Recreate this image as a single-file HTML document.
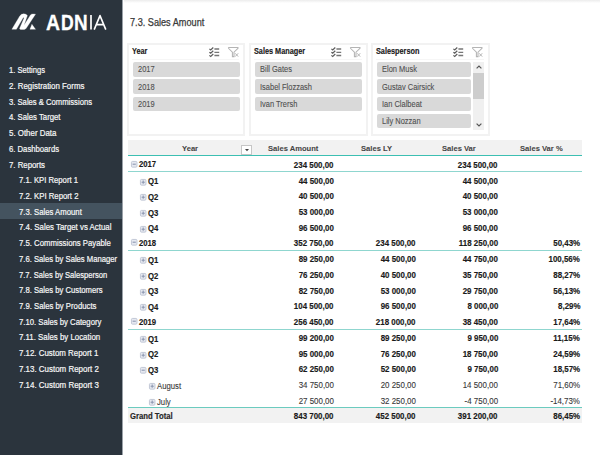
<!DOCTYPE html>
<html><head><meta charset="utf-8"><style>
html,body{margin:0;padding:0;width:600px;height:455px;overflow:hidden;background:#fff;}
body{position:relative;font-family:"Liberation Sans",sans-serif;}
.b{position:absolute;}
.t{position:absolute;white-space:nowrap;line-height:1;transform-origin:0 0;}
.t.r{transform-origin:100% 0;}
svg{overflow:visible}
</style></head><body>
<div class="b" style="left:0px;top:0px;width:122px;height:455px;background:#2b343d;"></div>
<div class="b" style="left:122px;top:0px;width:1px;height:455px;background:#9aa1a8;"></div>
<div class="b" style="left:0px;top:203px;width:122px;height:15.5px;background:#44535f;"></div>
<span class="t" style="left:9.10px;top:66.20px;font-size:8.5px;color:#f7f7f7;font-weight:normal;transform:scaleX(0.895);-webkit-text-stroke:0.2px #f7f7f7;">1. Settings</span>
<span class="t" style="left:9.10px;top:81.92px;font-size:8.5px;color:#f7f7f7;font-weight:normal;transform:scaleX(0.928);-webkit-text-stroke:0.2px #f7f7f7;">2. Registration Forms</span>
<span class="t" style="left:9.10px;top:97.64px;font-size:8.5px;color:#f7f7f7;font-weight:normal;transform:scaleX(0.901);-webkit-text-stroke:0.2px #f7f7f7;">3. Sales &amp; Commissions</span>
<span class="t" style="left:9.10px;top:113.36px;font-size:8.5px;color:#f7f7f7;font-weight:normal;transform:scaleX(0.91);-webkit-text-stroke:0.2px #f7f7f7;">4. Sales Target</span>
<span class="t" style="left:9.10px;top:129.08px;font-size:8.5px;color:#f7f7f7;font-weight:normal;transform:scaleX(0.929);-webkit-text-stroke:0.2px #f7f7f7;">5. Other Data</span>
<span class="t" style="left:9.10px;top:144.80px;font-size:8.5px;color:#f7f7f7;font-weight:normal;transform:scaleX(0.905);-webkit-text-stroke:0.2px #f7f7f7;">6. Dashboards</span>
<span class="t" style="left:9.10px;top:160.52px;font-size:8.5px;color:#f7f7f7;font-weight:normal;transform:scaleX(0.917);-webkit-text-stroke:0.2px #f7f7f7;">7. Reports</span>
<span class="t" style="left:18.90px;top:176.24px;font-size:8.5px;color:#f7f7f7;font-weight:normal;transform:scaleX(0.905);-webkit-text-stroke:0.2px #f7f7f7;">7.1. KPI Report 1</span>
<span class="t" style="left:18.90px;top:191.96px;font-size:8.5px;color:#f7f7f7;font-weight:normal;transform:scaleX(0.912);-webkit-text-stroke:0.2px #f7f7f7;">7.2. KPI Report 2</span>
<span class="t" style="left:18.90px;top:207.68px;font-size:8.5px;color:#f7f7f7;font-weight:normal;transform:scaleX(0.91);-webkit-text-stroke:0.2px #f7f7f7;">7.3. Sales Amount</span>
<span class="t" style="left:18.90px;top:223.40px;font-size:8.5px;color:#f7f7f7;font-weight:normal;transform:scaleX(0.924);-webkit-text-stroke:0.2px #f7f7f7;">7.4. Sales Target vs Actual</span>
<span class="t" style="left:18.90px;top:239.12px;font-size:8.5px;color:#f7f7f7;font-weight:normal;transform:scaleX(0.913);-webkit-text-stroke:0.2px #f7f7f7;">7.5. Commissions Payable</span>
<span class="t" style="left:18.90px;top:254.84px;font-size:8.5px;color:#f7f7f7;font-weight:normal;transform:scaleX(0.903);-webkit-text-stroke:0.2px #f7f7f7;">7.6. Sales by Sales Manager</span>
<span class="t" style="left:18.90px;top:270.56px;font-size:8.5px;color:#f7f7f7;font-weight:normal;transform:scaleX(0.894);-webkit-text-stroke:0.2px #f7f7f7;">7.7. Sales by Salesperson</span>
<span class="t" style="left:18.90px;top:286.28px;font-size:8.5px;color:#f7f7f7;font-weight:normal;transform:scaleX(0.903);-webkit-text-stroke:0.2px #f7f7f7;">7.8. Sales by Customers</span>
<span class="t" style="left:18.90px;top:302.00px;font-size:8.5px;color:#f7f7f7;font-weight:normal;transform:scaleX(0.91);-webkit-text-stroke:0.2px #f7f7f7;">7.9. Sales by Products</span>
<span class="t" style="left:18.90px;top:317.72px;font-size:8.5px;color:#f7f7f7;font-weight:normal;transform:scaleX(0.908);-webkit-text-stroke:0.2px #f7f7f7;">7.10. Sales by Category</span>
<span class="t" style="left:18.90px;top:333.44px;font-size:8.5px;color:#f7f7f7;font-weight:normal;transform:scaleX(0.925);-webkit-text-stroke:0.2px #f7f7f7;">7.11. Sales by Location</span>
<span class="t" style="left:18.90px;top:349.16px;font-size:8.5px;color:#f7f7f7;font-weight:normal;transform:scaleX(0.928);-webkit-text-stroke:0.2px #f7f7f7;">7.12. Custom Report 1</span>
<span class="t" style="left:18.90px;top:364.88px;font-size:8.5px;color:#f7f7f7;font-weight:normal;transform:scaleX(0.934);-webkit-text-stroke:0.2px #f7f7f7;">7.13. Custom Report 2</span>
<span class="t" style="left:18.90px;top:380.60px;font-size:8.5px;color:#f7f7f7;font-weight:normal;transform:scaleX(0.934);-webkit-text-stroke:0.2px #f7f7f7;">7.14. Custom Report 3</span>
<svg class="b" style="left:0;top:0" width="122" height="40" viewBox="0 0 122 40">
<path d="M11.9,29.3 L19.8,15.9 Q21.2,13.9 23.8,13.8 Q26.3,13.9 27.4,15.6 L24.0,25.2 L30.5,14.9 Q31.3,14.1 33,14.0 L35.5,14.2 L26.2,28.3 Q25.5,29.4 24.3,29.4 L20.6,29.4 Q19.3,29.2 19.7,28.2 L24.1,17.9 Q23.7,17.1 23.1,17.8 L16.4,29.3 Z" fill="#fff" stroke="#fff" stroke-width="0.3" stroke-linejoin="round"/>
<path d="M31.9,24.3 L35.5,29.3 L30.0,29.3 Z" fill="#fff" stroke="#fff" stroke-width="0.3"/>
</svg>
<span class="t" style="left:46.30px;top:11.68px;font-size:22px;color:#ffffff;font-weight:bold;transform:scaleX(0.88);-webkit-text-stroke:0.3px #fff;">A</span>
<span class="t" style="left:60.70px;top:11.68px;font-size:22px;color:#ffffff;font-weight:bold;transform:scaleX(0.8);-webkit-text-stroke:0.3px #fff;">D</span>
<span class="t" style="left:74.00px;top:11.68px;font-size:22px;color:#ffffff;font-weight:bold;transform:scaleX(0.86);-webkit-text-stroke:0.3px #fff;">N</span>
<svg class="b" style="left:0;top:0" width="122" height="40" viewBox="0 0 122 40"><path d="M91.0,14.9 V29.6" stroke="#fff" stroke-width="1.7"/><path d="M94.2,29.6 L100.0,15.6 L105.8,29.6 M96.4,24.6 H103.6" fill="none" stroke="#fff" stroke-width="1.6" stroke-linejoin="round"/></svg>
<div class="b" style="left:124px;top:0;width:476px;height:3px;background:linear-gradient(#ececec,#fff)"></div>
<span class="t" style="left:130.00px;top:17.73px;font-size:10px;color:#3a3a3a;font-weight:normal;transform:scaleX(0.915);-webkit-text-stroke:0.25px #3a3a3a;">7.3. Sales Amount</span>
<div class="b" style="left:126.8px;top:43.2px;width:118.60000000000001px;height:92.99999999999999px;border:2px solid #f2f2f2;box-sizing:border-box;background:#fff"></div>
<span class="t" style="left:132.40px;top:47.35px;font-size:8.8px;color:#1a1a1a;font-weight:bold;transform:scaleX(0.83);-webkit-text-stroke:0.15px #1a1a1a;">Year</span>
<svg class="b" style="left:208.8px;top:46.7px" width="11" height="10" viewBox="0 0 11 10">
<path d="M0.4,1.9 L1.7,3.0 L4.3,0.5 M0.4,5.2 L1.7,6.3 L4.3,3.8 M0.4,8.4 L1.7,9.5 L4.3,7.0" fill="none" stroke="#5c5c5c" stroke-width="1.2"/>
<path d="M5.4,2.0 H10.2 M5.4,5.3 H10.2 M5.4,8.5 H10.2" stroke="#767676" stroke-width="1.3"/>
</svg>
<svg class="b" style="left:227.8px;top:46.7px" width="11" height="10" viewBox="0 0 11 10">
<path d="M1.0,0.4 H9.6 Q10.6,0.5 9.9,1.5 L6.0,5.2 V9.6 H4.4 V5.2 L0.7,1.5 Q0,0.5 1.0,0.4 Z" fill="none" stroke="#b4b4b4" stroke-width="1.05"/>
<path d="M7.2,6.3 L10.2,9.6 M10.2,6.3 L7.2,9.6" stroke="#b4b4b4" stroke-width="1"/>
</svg>
<div class="b" style="left:131.8px;top:58.6px;width:107.6px;height:1.0px;background:#f6f6f6;"></div>
<div class="b" style="left:133.0px;top:62.0px;width:106.70000000000002px;height:14.7px;background:#d9d9d9;border-radius:2px"></div>
<span class="t" style="left:138.10px;top:65.45px;font-size:8.8px;color:#4f4f4f;font-weight:normal;transform:scaleX(0.85);-webkit-text-stroke:0.1px #4f4f4f;">2017</span>
<div class="b" style="left:133.0px;top:79.25px;width:106.70000000000002px;height:14.7px;background:#d9d9d9;border-radius:2px"></div>
<span class="t" style="left:138.10px;top:82.70px;font-size:8.8px;color:#4f4f4f;font-weight:normal;transform:scaleX(0.85);-webkit-text-stroke:0.1px #4f4f4f;">2018</span>
<div class="b" style="left:133.0px;top:96.5px;width:106.70000000000002px;height:14.7px;background:#d9d9d9;border-radius:2px"></div>
<span class="t" style="left:138.10px;top:99.95px;font-size:8.8px;color:#4f4f4f;font-weight:normal;transform:scaleX(0.85);-webkit-text-stroke:0.1px #4f4f4f;">2019</span>
<div class="b" style="left:248.6px;top:43.2px;width:119.1px;height:92.99999999999999px;border:2px solid #f2f2f2;box-sizing:border-box;background:#fff"></div>
<span class="t" style="left:254.20px;top:47.35px;font-size:8.8px;color:#1a1a1a;font-weight:bold;transform:scaleX(0.83);-webkit-text-stroke:0.15px #1a1a1a;">Sales Manager</span>
<svg class="b" style="left:331.09999999999997px;top:46.7px" width="11" height="10" viewBox="0 0 11 10">
<path d="M0.4,1.9 L1.7,3.0 L4.3,0.5 M0.4,5.2 L1.7,6.3 L4.3,3.8 M0.4,8.4 L1.7,9.5 L4.3,7.0" fill="none" stroke="#5c5c5c" stroke-width="1.2"/>
<path d="M5.4,2.0 H10.2 M5.4,5.3 H10.2 M5.4,8.5 H10.2" stroke="#767676" stroke-width="1.3"/>
</svg>
<svg class="b" style="left:350.09999999999997px;top:46.7px" width="11" height="10" viewBox="0 0 11 10">
<path d="M1.0,0.4 H9.6 Q10.6,0.5 9.9,1.5 L6.0,5.2 V9.6 H4.4 V5.2 L0.7,1.5 Q0,0.5 1.0,0.4 Z" fill="none" stroke="#b4b4b4" stroke-width="1.05"/>
<path d="M7.2,6.3 L10.2,9.6 M10.2,6.3 L7.2,9.6" stroke="#b4b4b4" stroke-width="1"/>
</svg>
<div class="b" style="left:253.6px;top:58.6px;width:108.1px;height:1.0px;background:#f6f6f6;"></div>
<div class="b" style="left:254.79999999999998px;top:62.0px;width:107.20000000000002px;height:14.7px;background:#d9d9d9;border-radius:2px"></div>
<span class="t" style="left:259.90px;top:65.45px;font-size:8.8px;color:#4f4f4f;font-weight:normal;transform:scaleX(0.85);-webkit-text-stroke:0.1px #4f4f4f;">Bill Gates</span>
<div class="b" style="left:254.79999999999998px;top:79.25px;width:107.20000000000002px;height:14.7px;background:#d9d9d9;border-radius:2px"></div>
<span class="t" style="left:259.90px;top:82.70px;font-size:8.8px;color:#4f4f4f;font-weight:normal;transform:scaleX(0.85);-webkit-text-stroke:0.1px #4f4f4f;">Isabel Flozzash</span>
<div class="b" style="left:254.79999999999998px;top:96.5px;width:107.20000000000002px;height:14.7px;background:#d9d9d9;border-radius:2px"></div>
<span class="t" style="left:259.90px;top:99.95px;font-size:8.8px;color:#4f4f4f;font-weight:normal;transform:scaleX(0.85);-webkit-text-stroke:0.1px #4f4f4f;">Ivan Trersh</span>
<div class="b" style="left:370.8px;top:43.2px;width:119.19999999999999px;height:92.99999999999999px;border:2px solid #f2f2f2;box-sizing:border-box;background:#fff"></div>
<span class="t" style="left:376.40px;top:47.35px;font-size:8.8px;color:#1a1a1a;font-weight:bold;transform:scaleX(0.83);-webkit-text-stroke:0.15px #1a1a1a;">Salesperson</span>
<svg class="b" style="left:453.4px;top:46.7px" width="11" height="10" viewBox="0 0 11 10">
<path d="M0.4,1.9 L1.7,3.0 L4.3,0.5 M0.4,5.2 L1.7,6.3 L4.3,3.8 M0.4,8.4 L1.7,9.5 L4.3,7.0" fill="none" stroke="#5c5c5c" stroke-width="1.2"/>
<path d="M5.4,2.0 H10.2 M5.4,5.3 H10.2 M5.4,8.5 H10.2" stroke="#767676" stroke-width="1.3"/>
</svg>
<svg class="b" style="left:472.4px;top:46.7px" width="11" height="10" viewBox="0 0 11 10">
<path d="M1.0,0.4 H9.6 Q10.6,0.5 9.9,1.5 L6.0,5.2 V9.6 H4.4 V5.2 L0.7,1.5 Q0,0.5 1.0,0.4 Z" fill="none" stroke="#b4b4b4" stroke-width="1.05"/>
<path d="M7.2,6.3 L10.2,9.6 M10.2,6.3 L7.2,9.6" stroke="#b4b4b4" stroke-width="1"/>
</svg>
<div class="b" style="left:375.8px;top:58.6px;width:108.19999999999999px;height:1.0px;background:#f6f6f6;"></div>
<div class="b" style="left:377.0px;top:62.0px;width:93.60000000000002px;height:14.7px;background:#d9d9d9;border-radius:2px"></div>
<span class="t" style="left:382.10px;top:65.45px;font-size:8.8px;color:#4f4f4f;font-weight:normal;transform:scaleX(0.85);-webkit-text-stroke:0.1px #4f4f4f;">Elon Musk</span>
<div class="b" style="left:377.0px;top:79.25px;width:93.60000000000002px;height:14.7px;background:#d9d9d9;border-radius:2px"></div>
<span class="t" style="left:382.10px;top:82.70px;font-size:8.8px;color:#4f4f4f;font-weight:normal;transform:scaleX(0.85);-webkit-text-stroke:0.1px #4f4f4f;">Gustav Cairsick</span>
<div class="b" style="left:377.0px;top:96.5px;width:93.60000000000002px;height:14.7px;background:#d9d9d9;border-radius:2px"></div>
<span class="t" style="left:382.10px;top:99.95px;font-size:8.8px;color:#4f4f4f;font-weight:normal;transform:scaleX(0.85);-webkit-text-stroke:0.1px #4f4f4f;">Ian Clalbeat</span>
<div class="b" style="left:377.0px;top:113.75px;width:93.60000000000002px;height:14.7px;background:#d9d9d9;border-radius:2px"></div>
<span class="t" style="left:382.10px;top:117.20px;font-size:8.8px;color:#4f4f4f;font-weight:normal;transform:scaleX(0.85);-webkit-text-stroke:0.1px #4f4f4f;">Lily Nozzan</span>
<div class="b" style="left:473.25px;top:61.8px;width:10.5px;height:67.89999999999999px;background:#f0f0f0;"></div>
<div class="b" style="left:473.25px;top:72.9px;width:10.5px;height:26.0px;background:#cdcdcd;"></div>
<svg class="b" style="left:475.5px;top:65px" width="6" height="4" viewBox="0 0 6 4"><path d="M0.6,3.4 L3,1 L5.4,3.4" fill="none" stroke="#555" stroke-width="1.2"/></svg>
<svg class="b" style="left:475.5px;top:122.5px" width="6" height="4" viewBox="0 0 6 4"><path d="M0.6,0.6 L3,3 L5.4,0.6" fill="none" stroke="#555" stroke-width="1.2"/></svg>
<div class="b" style="left:127.7px;top:139.5px;width:454.59999999999997px;height:15.5px;background:#f2f2f2;"></div>
<div class="b" style="left:127.7px;top:155.0px;width:454.59999999999997px;height:1.3000000000000114px;background:#3cbfb2;"></div>
<span class="t" style="left:182.00px;top:144.83px;font-size:8px;color:#444444;font-weight:bold;transform:scaleX(0.95);-webkit-text-stroke:0.05px #444;">Year</span>
<span class="t" style="left:267.50px;top:144.83px;font-size:8px;color:#444444;font-weight:bold;transform:scaleX(0.95);-webkit-text-stroke:0.05px #444;">Sales Amount</span>
<span class="t" style="left:361.20px;top:144.83px;font-size:8px;color:#444444;font-weight:bold;transform:scaleX(0.95);-webkit-text-stroke:0.05px #444;">Sales LY</span>
<span class="t" style="left:442.00px;top:144.83px;font-size:8px;color:#444444;font-weight:bold;transform:scaleX(0.95);-webkit-text-stroke:0.05px #444;">Sales Var</span>
<span class="t" style="left:520.00px;top:144.83px;font-size:8px;color:#444444;font-weight:bold;transform:scaleX(0.95);-webkit-text-stroke:0.05px #444;">Sales Var %</span>
<div class="b" style="left:241.4px;top:145px;width:10.3px;height:9.8px;border:1px solid #c6c6c6;box-sizing:border-box;background:#fff"></div>
<svg class="b" style="left:244.5px;top:148.8px" width="5" height="3" viewBox="0 0 5 3"><path d="M0,0 H4 L2,2.2 Z" fill="#444"/></svg>
<svg class="b" style="left:131.2px;top:160.80px" width="6.4" height="6.6" viewBox="0 0 6.4 6.6"><rect x="0.45" y="0.45" width="5.5" height="5.7" rx="1" fill="#e6e9f1" stroke="#bcc3d3" stroke-width="0.9"/><path d="M1.6,3.2 H4.8" stroke="#8c97b0" stroke-width="1.1"/></svg>
<span class="t" style="left:139.20px;top:160.27px;font-size:8.3px;color:#1a1a1a;font-weight:bold;transform:scaleX(0.93);-webkit-text-stroke:0.15px #1a1a1a;">2017</span>
<span class="t r" style="right:266.40px;top:160.77px;font-size:8.3px;color:#1a1a1a;font-weight:bold;transform:scaleX(0.955);-webkit-text-stroke:0.15px #1a1a1a;">234 500,00</span>
<span class="t r" style="right:102.20px;top:160.77px;font-size:8.3px;color:#1a1a1a;font-weight:bold;transform:scaleX(0.955);-webkit-text-stroke:0.15px #1a1a1a;">234 500,00</span>
<div class="b" style="left:127.7px;top:171.2px;width:454.59999999999997px;height:1.0px;background:#8fd6cf;"></div>
<svg class="b" style="left:140.0px;top:178.53px" width="6.4" height="6.6" viewBox="0 0 6.4 6.6"><rect x="0.45" y="0.45" width="5.5" height="5.7" rx="1" fill="#e6e9f1" stroke="#bcc3d3" stroke-width="0.9"/><path d="M1.6,3.2 H4.8 M3.2,1.6 V4.8" stroke="#8c97b0" stroke-width="1.1"/></svg>
<span class="t" style="left:148.00px;top:177.30px;font-size:8.3px;color:#1a1a1a;font-weight:bold;transform:scaleX(0.93);-webkit-text-stroke:0.15px #1a1a1a;">Q1</span>
<span class="t r" style="right:266.40px;top:176.50px;font-size:8.3px;color:#1a1a1a;font-weight:bold;transform:scaleX(0.955);-webkit-text-stroke:0.15px #1a1a1a;">44 500,00</span>
<span class="t r" style="right:102.20px;top:176.50px;font-size:8.3px;color:#1a1a1a;font-weight:bold;transform:scaleX(0.955);-webkit-text-stroke:0.15px #1a1a1a;">44 500,00</span>
<svg class="b" style="left:140.0px;top:194.26px" width="6.4" height="6.6" viewBox="0 0 6.4 6.6"><rect x="0.45" y="0.45" width="5.5" height="5.7" rx="1" fill="#e6e9f1" stroke="#bcc3d3" stroke-width="0.9"/><path d="M1.6,3.2 H4.8 M3.2,1.6 V4.8" stroke="#8c97b0" stroke-width="1.1"/></svg>
<span class="t" style="left:148.00px;top:193.03px;font-size:8.3px;color:#1a1a1a;font-weight:bold;transform:scaleX(0.93);-webkit-text-stroke:0.15px #1a1a1a;">Q2</span>
<span class="t r" style="right:266.40px;top:192.23px;font-size:8.3px;color:#1a1a1a;font-weight:bold;transform:scaleX(0.955);-webkit-text-stroke:0.15px #1a1a1a;">40 500,00</span>
<span class="t r" style="right:102.20px;top:192.23px;font-size:8.3px;color:#1a1a1a;font-weight:bold;transform:scaleX(0.955);-webkit-text-stroke:0.15px #1a1a1a;">40 500,00</span>
<svg class="b" style="left:140.0px;top:209.99px" width="6.4" height="6.6" viewBox="0 0 6.4 6.6"><rect x="0.45" y="0.45" width="5.5" height="5.7" rx="1" fill="#e6e9f1" stroke="#bcc3d3" stroke-width="0.9"/><path d="M1.6,3.2 H4.8 M3.2,1.6 V4.8" stroke="#8c97b0" stroke-width="1.1"/></svg>
<span class="t" style="left:148.00px;top:208.76px;font-size:8.3px;color:#1a1a1a;font-weight:bold;transform:scaleX(0.93);-webkit-text-stroke:0.15px #1a1a1a;">Q3</span>
<span class="t r" style="right:266.40px;top:207.96px;font-size:8.3px;color:#1a1a1a;font-weight:bold;transform:scaleX(0.955);-webkit-text-stroke:0.15px #1a1a1a;">53 000,00</span>
<span class="t r" style="right:102.20px;top:207.96px;font-size:8.3px;color:#1a1a1a;font-weight:bold;transform:scaleX(0.955);-webkit-text-stroke:0.15px #1a1a1a;">53 000,00</span>
<svg class="b" style="left:140.0px;top:225.72px" width="6.4" height="6.6" viewBox="0 0 6.4 6.6"><rect x="0.45" y="0.45" width="5.5" height="5.7" rx="1" fill="#e6e9f1" stroke="#bcc3d3" stroke-width="0.9"/><path d="M1.6,3.2 H4.8 M3.2,1.6 V4.8" stroke="#8c97b0" stroke-width="1.1"/></svg>
<span class="t" style="left:148.00px;top:224.49px;font-size:8.3px;color:#1a1a1a;font-weight:bold;transform:scaleX(0.93);-webkit-text-stroke:0.15px #1a1a1a;">Q4</span>
<span class="t r" style="right:266.40px;top:223.69px;font-size:8.3px;color:#1a1a1a;font-weight:bold;transform:scaleX(0.955);-webkit-text-stroke:0.15px #1a1a1a;">96 500,00</span>
<span class="t r" style="right:102.20px;top:223.69px;font-size:8.3px;color:#1a1a1a;font-weight:bold;transform:scaleX(0.955);-webkit-text-stroke:0.15px #1a1a1a;">96 500,00</span>
<svg class="b" style="left:131.2px;top:239.45px" width="6.4" height="6.6" viewBox="0 0 6.4 6.6"><rect x="0.45" y="0.45" width="5.5" height="5.7" rx="1" fill="#e6e9f1" stroke="#bcc3d3" stroke-width="0.9"/><path d="M1.6,3.2 H4.8" stroke="#8c97b0" stroke-width="1.1"/></svg>
<span class="t" style="left:139.20px;top:238.92px;font-size:8.3px;color:#1a1a1a;font-weight:bold;transform:scaleX(0.93);-webkit-text-stroke:0.15px #1a1a1a;">2018</span>
<span class="t r" style="right:266.40px;top:239.42px;font-size:8.3px;color:#1a1a1a;font-weight:bold;transform:scaleX(0.955);-webkit-text-stroke:0.15px #1a1a1a;">352 750,00</span>
<span class="t r" style="right:184.30px;top:239.42px;font-size:8.3px;color:#1a1a1a;font-weight:bold;transform:scaleX(0.955);-webkit-text-stroke:0.15px #1a1a1a;">234 500,00</span>
<span class="t r" style="right:102.20px;top:239.42px;font-size:8.3px;color:#1a1a1a;font-weight:bold;transform:scaleX(0.955);-webkit-text-stroke:0.15px #1a1a1a;">118 250,00</span>
<span class="t r" style="right:19.90px;top:239.42px;font-size:8.3px;color:#1a1a1a;font-weight:bold;transform:scaleX(0.955);-webkit-text-stroke:0.15px #1a1a1a;">50,43%</span>
<div class="b" style="left:127.7px;top:249.85px;width:454.59999999999997px;height:1.0px;background:#8fd6cf;"></div>
<svg class="b" style="left:140.0px;top:257.18px" width="6.4" height="6.6" viewBox="0 0 6.4 6.6"><rect x="0.45" y="0.45" width="5.5" height="5.7" rx="1" fill="#e6e9f1" stroke="#bcc3d3" stroke-width="0.9"/><path d="M1.6,3.2 H4.8 M3.2,1.6 V4.8" stroke="#8c97b0" stroke-width="1.1"/></svg>
<span class="t" style="left:148.00px;top:255.95px;font-size:8.3px;color:#1a1a1a;font-weight:bold;transform:scaleX(0.93);-webkit-text-stroke:0.15px #1a1a1a;">Q1</span>
<span class="t r" style="right:266.40px;top:255.15px;font-size:8.3px;color:#1a1a1a;font-weight:bold;transform:scaleX(0.955);-webkit-text-stroke:0.15px #1a1a1a;">89 250,00</span>
<span class="t r" style="right:184.30px;top:255.15px;font-size:8.3px;color:#1a1a1a;font-weight:bold;transform:scaleX(0.955);-webkit-text-stroke:0.15px #1a1a1a;">44 500,00</span>
<span class="t r" style="right:102.20px;top:255.15px;font-size:8.3px;color:#1a1a1a;font-weight:bold;transform:scaleX(0.955);-webkit-text-stroke:0.15px #1a1a1a;">44 750,00</span>
<span class="t r" style="right:19.90px;top:255.15px;font-size:8.3px;color:#1a1a1a;font-weight:bold;transform:scaleX(0.955);-webkit-text-stroke:0.15px #1a1a1a;">100,56%</span>
<svg class="b" style="left:140.0px;top:272.91px" width="6.4" height="6.6" viewBox="0 0 6.4 6.6"><rect x="0.45" y="0.45" width="5.5" height="5.7" rx="1" fill="#e6e9f1" stroke="#bcc3d3" stroke-width="0.9"/><path d="M1.6,3.2 H4.8 M3.2,1.6 V4.8" stroke="#8c97b0" stroke-width="1.1"/></svg>
<span class="t" style="left:148.00px;top:271.68px;font-size:8.3px;color:#1a1a1a;font-weight:bold;transform:scaleX(0.93);-webkit-text-stroke:0.15px #1a1a1a;">Q2</span>
<span class="t r" style="right:266.40px;top:270.88px;font-size:8.3px;color:#1a1a1a;font-weight:bold;transform:scaleX(0.955);-webkit-text-stroke:0.15px #1a1a1a;">76 250,00</span>
<span class="t r" style="right:184.30px;top:270.88px;font-size:8.3px;color:#1a1a1a;font-weight:bold;transform:scaleX(0.955);-webkit-text-stroke:0.15px #1a1a1a;">40 500,00</span>
<span class="t r" style="right:102.20px;top:270.88px;font-size:8.3px;color:#1a1a1a;font-weight:bold;transform:scaleX(0.955);-webkit-text-stroke:0.15px #1a1a1a;">35 750,00</span>
<span class="t r" style="right:19.90px;top:270.88px;font-size:8.3px;color:#1a1a1a;font-weight:bold;transform:scaleX(0.955);-webkit-text-stroke:0.15px #1a1a1a;">88,27%</span>
<svg class="b" style="left:140.0px;top:288.64px" width="6.4" height="6.6" viewBox="0 0 6.4 6.6"><rect x="0.45" y="0.45" width="5.5" height="5.7" rx="1" fill="#e6e9f1" stroke="#bcc3d3" stroke-width="0.9"/><path d="M1.6,3.2 H4.8 M3.2,1.6 V4.8" stroke="#8c97b0" stroke-width="1.1"/></svg>
<span class="t" style="left:148.00px;top:287.41px;font-size:8.3px;color:#1a1a1a;font-weight:bold;transform:scaleX(0.93);-webkit-text-stroke:0.15px #1a1a1a;">Q3</span>
<span class="t r" style="right:266.40px;top:286.61px;font-size:8.3px;color:#1a1a1a;font-weight:bold;transform:scaleX(0.955);-webkit-text-stroke:0.15px #1a1a1a;">82 750,00</span>
<span class="t r" style="right:184.30px;top:286.61px;font-size:8.3px;color:#1a1a1a;font-weight:bold;transform:scaleX(0.955);-webkit-text-stroke:0.15px #1a1a1a;">53 000,00</span>
<span class="t r" style="right:102.20px;top:286.61px;font-size:8.3px;color:#1a1a1a;font-weight:bold;transform:scaleX(0.955);-webkit-text-stroke:0.15px #1a1a1a;">29 750,00</span>
<span class="t r" style="right:19.90px;top:286.61px;font-size:8.3px;color:#1a1a1a;font-weight:bold;transform:scaleX(0.955);-webkit-text-stroke:0.15px #1a1a1a;">56,13%</span>
<svg class="b" style="left:140.0px;top:304.37px" width="6.4" height="6.6" viewBox="0 0 6.4 6.6"><rect x="0.45" y="0.45" width="5.5" height="5.7" rx="1" fill="#e6e9f1" stroke="#bcc3d3" stroke-width="0.9"/><path d="M1.6,3.2 H4.8 M3.2,1.6 V4.8" stroke="#8c97b0" stroke-width="1.1"/></svg>
<span class="t" style="left:148.00px;top:303.14px;font-size:8.3px;color:#1a1a1a;font-weight:bold;transform:scaleX(0.93);-webkit-text-stroke:0.15px #1a1a1a;">Q4</span>
<span class="t r" style="right:266.40px;top:302.34px;font-size:8.3px;color:#1a1a1a;font-weight:bold;transform:scaleX(0.955);-webkit-text-stroke:0.15px #1a1a1a;">104 500,00</span>
<span class="t r" style="right:184.30px;top:302.34px;font-size:8.3px;color:#1a1a1a;font-weight:bold;transform:scaleX(0.955);-webkit-text-stroke:0.15px #1a1a1a;">96 500,00</span>
<span class="t r" style="right:102.20px;top:302.34px;font-size:8.3px;color:#1a1a1a;font-weight:bold;transform:scaleX(0.955);-webkit-text-stroke:0.15px #1a1a1a;">8 000,00</span>
<span class="t r" style="right:19.90px;top:302.34px;font-size:8.3px;color:#1a1a1a;font-weight:bold;transform:scaleX(0.955);-webkit-text-stroke:0.15px #1a1a1a;">8,29%</span>
<svg class="b" style="left:131.2px;top:318.10px" width="6.4" height="6.6" viewBox="0 0 6.4 6.6"><rect x="0.45" y="0.45" width="5.5" height="5.7" rx="1" fill="#e6e9f1" stroke="#bcc3d3" stroke-width="0.9"/><path d="M1.6,3.2 H4.8" stroke="#8c97b0" stroke-width="1.1"/></svg>
<span class="t" style="left:139.20px;top:317.57px;font-size:8.3px;color:#1a1a1a;font-weight:bold;transform:scaleX(0.93);-webkit-text-stroke:0.15px #1a1a1a;">2019</span>
<span class="t r" style="right:266.40px;top:318.07px;font-size:8.3px;color:#1a1a1a;font-weight:bold;transform:scaleX(0.955);-webkit-text-stroke:0.15px #1a1a1a;">256 450,00</span>
<span class="t r" style="right:184.30px;top:318.07px;font-size:8.3px;color:#1a1a1a;font-weight:bold;transform:scaleX(0.955);-webkit-text-stroke:0.15px #1a1a1a;">218 000,00</span>
<span class="t r" style="right:102.20px;top:318.07px;font-size:8.3px;color:#1a1a1a;font-weight:bold;transform:scaleX(0.955);-webkit-text-stroke:0.15px #1a1a1a;">38 450,00</span>
<span class="t r" style="right:19.90px;top:318.07px;font-size:8.3px;color:#1a1a1a;font-weight:bold;transform:scaleX(0.955);-webkit-text-stroke:0.15px #1a1a1a;">17,64%</span>
<div class="b" style="left:127.7px;top:328.5px;width:454.59999999999997px;height:1.0px;background:#8fd6cf;"></div>
<svg class="b" style="left:140.0px;top:335.83px" width="6.4" height="6.6" viewBox="0 0 6.4 6.6"><rect x="0.45" y="0.45" width="5.5" height="5.7" rx="1" fill="#e6e9f1" stroke="#bcc3d3" stroke-width="0.9"/><path d="M1.6,3.2 H4.8 M3.2,1.6 V4.8" stroke="#8c97b0" stroke-width="1.1"/></svg>
<span class="t" style="left:148.00px;top:334.60px;font-size:8.3px;color:#1a1a1a;font-weight:bold;transform:scaleX(0.93);-webkit-text-stroke:0.15px #1a1a1a;">Q1</span>
<span class="t r" style="right:266.40px;top:333.80px;font-size:8.3px;color:#1a1a1a;font-weight:bold;transform:scaleX(0.955);-webkit-text-stroke:0.15px #1a1a1a;">99 200,00</span>
<span class="t r" style="right:184.30px;top:333.80px;font-size:8.3px;color:#1a1a1a;font-weight:bold;transform:scaleX(0.955);-webkit-text-stroke:0.15px #1a1a1a;">89 250,00</span>
<span class="t r" style="right:102.20px;top:333.80px;font-size:8.3px;color:#1a1a1a;font-weight:bold;transform:scaleX(0.955);-webkit-text-stroke:0.15px #1a1a1a;">9 950,00</span>
<span class="t r" style="right:19.90px;top:333.80px;font-size:8.3px;color:#1a1a1a;font-weight:bold;transform:scaleX(0.955);-webkit-text-stroke:0.15px #1a1a1a;">11,15%</span>
<svg class="b" style="left:140.0px;top:351.56px" width="6.4" height="6.6" viewBox="0 0 6.4 6.6"><rect x="0.45" y="0.45" width="5.5" height="5.7" rx="1" fill="#e6e9f1" stroke="#bcc3d3" stroke-width="0.9"/><path d="M1.6,3.2 H4.8 M3.2,1.6 V4.8" stroke="#8c97b0" stroke-width="1.1"/></svg>
<span class="t" style="left:148.00px;top:350.33px;font-size:8.3px;color:#1a1a1a;font-weight:bold;transform:scaleX(0.93);-webkit-text-stroke:0.15px #1a1a1a;">Q2</span>
<span class="t r" style="right:266.40px;top:349.53px;font-size:8.3px;color:#1a1a1a;font-weight:bold;transform:scaleX(0.955);-webkit-text-stroke:0.15px #1a1a1a;">95 000,00</span>
<span class="t r" style="right:184.30px;top:349.53px;font-size:8.3px;color:#1a1a1a;font-weight:bold;transform:scaleX(0.955);-webkit-text-stroke:0.15px #1a1a1a;">76 250,00</span>
<span class="t r" style="right:102.20px;top:349.53px;font-size:8.3px;color:#1a1a1a;font-weight:bold;transform:scaleX(0.955);-webkit-text-stroke:0.15px #1a1a1a;">18 750,00</span>
<span class="t r" style="right:19.90px;top:349.53px;font-size:8.3px;color:#1a1a1a;font-weight:bold;transform:scaleX(0.955);-webkit-text-stroke:0.15px #1a1a1a;">24,59%</span>
<svg class="b" style="left:140.0px;top:367.29px" width="6.4" height="6.6" viewBox="0 0 6.4 6.6"><rect x="0.45" y="0.45" width="5.5" height="5.7" rx="1" fill="#e6e9f1" stroke="#bcc3d3" stroke-width="0.9"/><path d="M1.6,3.2 H4.8" stroke="#8c97b0" stroke-width="1.1"/></svg>
<span class="t" style="left:148.00px;top:366.06px;font-size:8.3px;color:#1a1a1a;font-weight:bold;transform:scaleX(0.93);-webkit-text-stroke:0.15px #1a1a1a;">Q3</span>
<span class="t r" style="right:266.40px;top:365.26px;font-size:8.3px;color:#1a1a1a;font-weight:bold;transform:scaleX(0.955);-webkit-text-stroke:0.15px #1a1a1a;">62 250,00</span>
<span class="t r" style="right:184.30px;top:365.26px;font-size:8.3px;color:#1a1a1a;font-weight:bold;transform:scaleX(0.955);-webkit-text-stroke:0.15px #1a1a1a;">52 500,00</span>
<span class="t r" style="right:102.20px;top:365.26px;font-size:8.3px;color:#1a1a1a;font-weight:bold;transform:scaleX(0.955);-webkit-text-stroke:0.15px #1a1a1a;">9 750,00</span>
<span class="t r" style="right:19.90px;top:365.26px;font-size:8.3px;color:#1a1a1a;font-weight:bold;transform:scaleX(0.955);-webkit-text-stroke:0.15px #1a1a1a;">18,57%</span>
<svg class="b" style="left:148.7px;top:383.02px" width="6.4" height="6.6" viewBox="0 0 6.4 6.6"><rect x="0.45" y="0.45" width="5.5" height="5.7" rx="1" fill="#e6e9f1" stroke="#bcc3d3" stroke-width="0.9"/><path d="M1.6,3.2 H4.8 M3.2,1.6 V4.8" stroke="#8c97b0" stroke-width="1.1"/></svg>
<span class="t" style="left:156.80px;top:381.79px;font-size:8.3px;color:#383838;font-weight:normal;transform:scaleX(0.93);-webkit-text-stroke:0.1px #383838;">August</span>
<span class="t r" style="right:266.40px;top:380.99px;font-size:8.3px;color:#383838;font-weight:normal;transform:scaleX(0.955);-webkit-text-stroke:0.1px #383838;">34 750,00</span>
<span class="t r" style="right:184.30px;top:380.99px;font-size:8.3px;color:#383838;font-weight:normal;transform:scaleX(0.955);-webkit-text-stroke:0.1px #383838;">20 250,00</span>
<span class="t r" style="right:102.20px;top:380.99px;font-size:8.3px;color:#383838;font-weight:normal;transform:scaleX(0.955);-webkit-text-stroke:0.1px #383838;">14 500,00</span>
<span class="t r" style="right:19.90px;top:380.99px;font-size:8.3px;color:#383838;font-weight:normal;transform:scaleX(0.955);-webkit-text-stroke:0.1px #383838;">71,60%</span>
<svg class="b" style="left:148.7px;top:398.75px" width="6.4" height="6.6" viewBox="0 0 6.4 6.6"><rect x="0.45" y="0.45" width="5.5" height="5.7" rx="1" fill="#e6e9f1" stroke="#bcc3d3" stroke-width="0.9"/><path d="M1.6,3.2 H4.8 M3.2,1.6 V4.8" stroke="#8c97b0" stroke-width="1.1"/></svg>
<span class="t" style="left:156.80px;top:397.52px;font-size:8.3px;color:#383838;font-weight:normal;transform:scaleX(0.93);-webkit-text-stroke:0.1px #383838;">July</span>
<span class="t r" style="right:266.40px;top:396.72px;font-size:8.3px;color:#383838;font-weight:normal;transform:scaleX(0.955);-webkit-text-stroke:0.1px #383838;">27 500,00</span>
<span class="t r" style="right:184.30px;top:396.72px;font-size:8.3px;color:#383838;font-weight:normal;transform:scaleX(0.955);-webkit-text-stroke:0.1px #383838;">32 250,00</span>
<span class="t r" style="right:102.20px;top:396.72px;font-size:8.3px;color:#383838;font-weight:normal;transform:scaleX(0.955);-webkit-text-stroke:0.1px #383838;">-4 750,00</span>
<span class="t r" style="right:19.90px;top:396.72px;font-size:8.3px;color:#383838;font-weight:normal;transform:scaleX(0.955);-webkit-text-stroke:0.1px #383838;">-14,73%</span>
<div class="b" style="left:127.7px;top:407.7px;width:454.59999999999997px;height:15.5px;background:#f2f2f2;"></div>
<div class="b" style="left:127.7px;top:407px;width:454.59999999999997px;height:1.1999999999999886px;background:#6ccbbf;"></div>
<span class="t" style="left:130.00px;top:412.45px;font-size:8.3px;color:#262626;font-weight:bold;transform:scaleX(0.93);-webkit-text-stroke:0.15px #262626;">Grand Total</span>
<span class="t r" style="right:266.40px;top:412.45px;font-size:8.3px;color:#1a1a1a;font-weight:bold;transform:scaleX(0.955);-webkit-text-stroke:0.15px #1a1a1a;">843 700,00</span>
<span class="t r" style="right:184.30px;top:412.45px;font-size:8.3px;color:#1a1a1a;font-weight:bold;transform:scaleX(0.955);-webkit-text-stroke:0.15px #1a1a1a;">452 500,00</span>
<span class="t r" style="right:102.20px;top:412.45px;font-size:8.3px;color:#1a1a1a;font-weight:bold;transform:scaleX(0.955);-webkit-text-stroke:0.15px #1a1a1a;">391 200,00</span>
<span class="t r" style="right:19.90px;top:412.45px;font-size:8.3px;color:#1a1a1a;font-weight:bold;transform:scaleX(0.955);-webkit-text-stroke:0.15px #1a1a1a;">86,45%</span>
</body></html>
